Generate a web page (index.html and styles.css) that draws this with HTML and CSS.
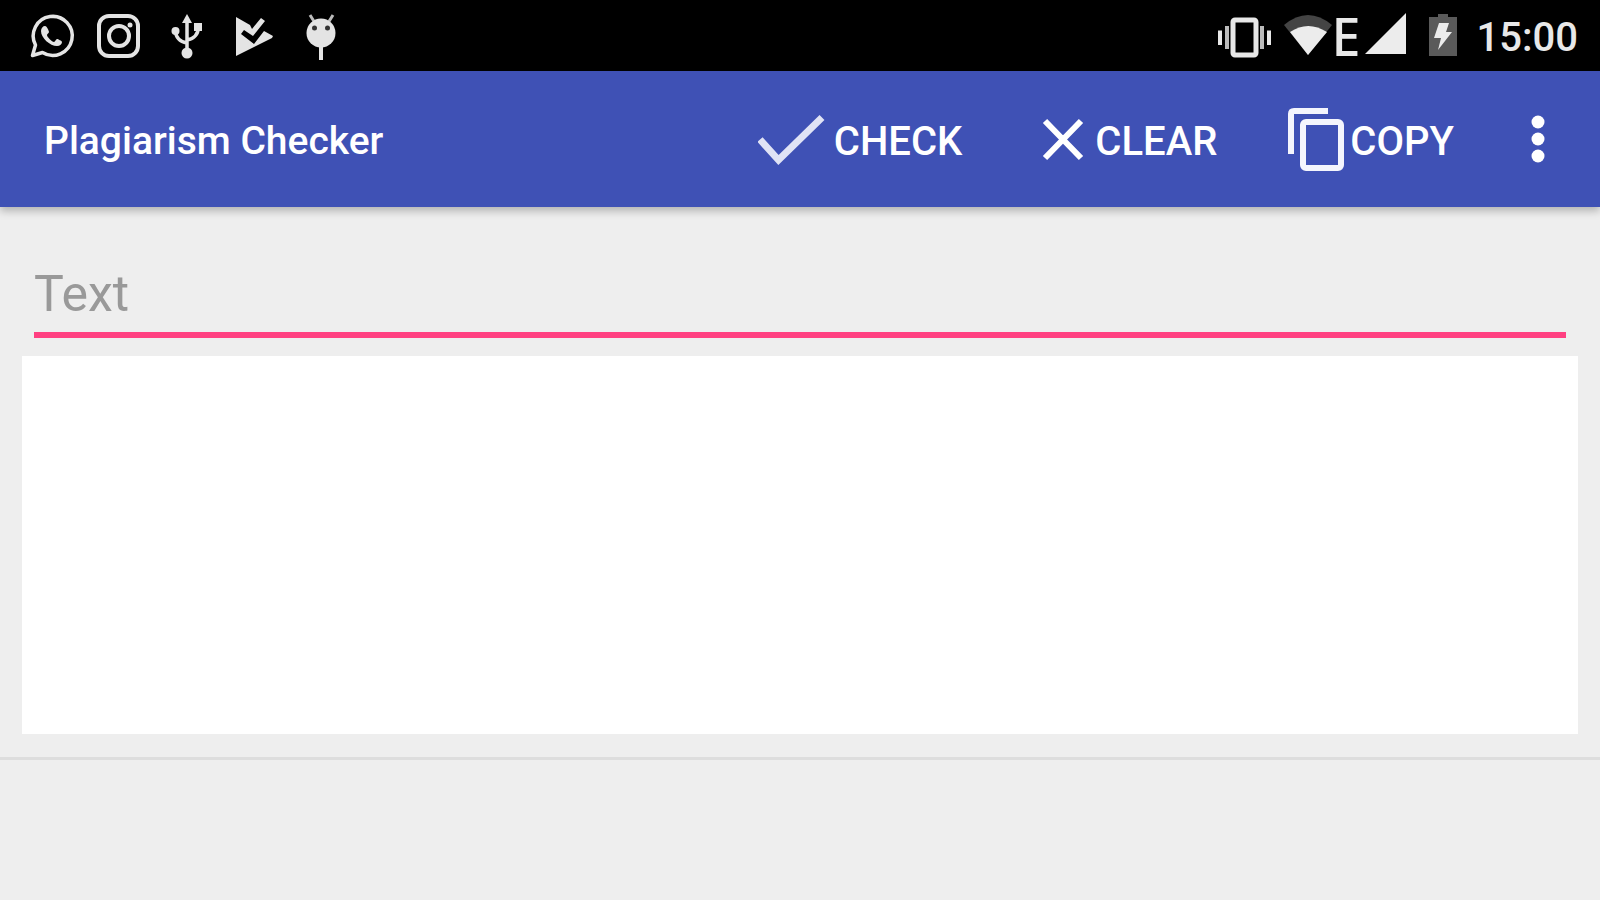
FILE: index.html
```html
<!DOCTYPE html>
<html lang="en">
<head>
  <meta charset="UTF-8">
  <meta name="viewport" content="width=device-width, initial-scale=1.0">
  <title>Plagiarism Checker</title>
  <link rel="stylesheet" href="styles.css">
</head>
<body>

  <!-- Status Bar -->
  <div class="status-bar">
    <div class="notifications">
      <svg class="status-icon" viewBox="0 0 48 48">
        <path d="M4.500 43.500 L7.500 33 A19.500 19.500 0 1 1 14.500 40.500 Z" fill="none" stroke="#e4e4e4" stroke-width="3.500" stroke-linejoin="round"/>
        <path d="M17 14c-2 0-4 2-4 5 0 7 9 15 16 15 3 0 5-2 5-4 0-1-4-3-5-3s-2 3-3 3c-2 0-7-5-7-7 0-1 2-2 2-3s-2-6-4-6z" fill="#e4e4e4"/>
      </svg>
      <svg class="status-icon" viewBox="0 0 48 48" fill="none" stroke="#e4e4e4" stroke-width="4">
        <rect x="4" y="4" width="39" height="40" rx="10"/>
        <circle cx="24" cy="24" r="10"/>
        <circle cx="35" cy="13" r="2.500" fill="#e4e4e4" stroke="none"/>
      </svg>
      <svg class="status-icon" viewBox="0 0 48 48" fill="#e4e4e4">
        <path d="M25 42V8M25 31Q14 29 13.500 19M25 28Q36 26 36.500 15" fill="none" stroke="#e4e4e4" stroke-width="3.500"/>
        <path d="M25 2l5 9H20z"/>
        <circle cx="13.500" cy="19" r="4"/>
        <rect x="32" y="11" width="8" height="8"/>
        <circle cx="25" cy="41" r="5.500"/>
      </svg>
      <svg class="status-icon" viewBox="0 0 48 48" fill="#e4e4e4">
        <path d="M7 5L21 13 23 17 32 6 36 9 24 24 15 18 12 22 25 32 35 19 44 24 43 26 7 44z"/>
      </svg>
      <svg class="status-icon" viewBox="0 0 48 48" fill="#e4e4e4">
        <path d="M14 3l5 8M37 3l-5 8" stroke="#bbb" stroke-width="3"/>
        <circle cx="25" cy="21" r="14.500"/>
        <path d="M25 34V48" stroke="#e4e4e4" stroke-width="4"/>
        <circle cx="18.500" cy="16" r="2.500" fill="#333"/>
        <circle cx="31.500" cy="16" r="2.500" fill="#333"/>
      </svg>
    </div>
    <div class="system">
      <svg class="vibrate-icon" viewBox="0 0 56 48" fill="none" stroke="#e8e8e8">
        <rect x="17" y="8" width="23" height="35" rx="2" stroke-width="5"/>
        <path d="M11 14V37M46 14V37" stroke="#bbb" stroke-width="4"/>
        <path d="M4 18.500V33M53 18.500V33" stroke-width="4"/>
      </svg>
      <svg class="wifi-icon" viewBox="0 0 48 48">
        <path d="M0 13Q24-7 48 13L24 43z" fill="#444"/>
        <path d="M6 20Q24 8 43 20L24 43z" fill="#ececec"/>
      </svg>
      <span class="network">E</span>
      <svg class="signal-icon" viewBox="0 0 42 48" fill="#ececec">
        <path d="M0 42L41 1V42z"/>
      </svg>
      <svg class="battery-icon" viewBox="0 0 28 48">
        <path d="M9 2h10v3h9v39H0V5h9z" fill="#5a5a5a"/>
        <path d="M10 11h10l-3 9h6L9 38l3-12H5z" fill="#ececec"/>
      </svg>
      <span class="clock">15:00</span>
    </div>
  </div>

  <!-- Toolbar -->
  <header class="toolbar">
    <h1 class="title">Plagiarism Checker</h1>
    <div class="actions">
      <button class="action" type="button">
        <svg class="action-icon" viewBox="0 0 76 76" fill="none" stroke="#e0e3f5" stroke-width="7">
          <path d="M2 38.500L20.500 59 64 16.500"/>
        </svg>
        <span class="label">CHECK</span>
      </button>
      <button class="action" type="button">
        <svg class="action-icon" viewBox="0 0 76 76" fill="none" stroke="#fff" stroke-width="6">
          <path d="M26 20L62 57M62 20L26 57"/>
        </svg>
        <span class="label">CLEAR</span>
      </button>
      <button class="action" type="button">
        <svg class="action-icon" viewBox="0 0 76 76" fill="none" stroke="#f4f5fd" stroke-width="6">
          <path d="M17 53V13Q17 10 20 10H54"/>
          <rect x="29" y="21" width="38" height="46" rx="3"/>
        </svg>
        <span class="label">COPY</span>
      </button>
      <button class="more" type="button" aria-label="More options">
        <svg class="more-icon" viewBox="0 0 54 76" fill="#fff">
          <circle cx="27" cy="21" r="6.500"/>
          <circle cx="27" cy="38" r="6.500"/>
          <circle cx="27" cy="55" r="6.500"/>
        </svg>
      </button>
    </div>
  </header>

  <!-- Text and Results -->
  <main class="content">
    <input class="text-input" type="text" placeholder="Text" aria-label="Text">
    <div class="results"></div>
  </main>

</body>
</html>
```
FILE: styles.css
```css
* {
  box-sizing: border-box;
}

body {
  margin: 0;
  min-height: 100vh;
  background-color: #eeeeee;
  font-family: Roboto, sans-serif;
}

.status-bar {
  display: flex;
  justify-content: space-between;
  align-items: center;
  height: 71px;
  padding: 0 22px 0 28px;
  background-color: #000;
  color: #e8e8e8;
}

.notifications {
  display: flex;
  gap: 19px;
}

.system {
  display: flex;
  align-items: center;
}

.status-icon {
  width: 48px;
  height: 48px;
}

.vibrate-icon {
  width: 56px;
  height: 48px;
  margin-right: 12px;
}

.wifi-icon {
  width: 48px;
  height: 48px;
}

.network {
  margin-right: 4px;
  font-family: "Noto Sans", sans-serif;
  font-size: 52px;
  font-weight: 500;
  line-height: 48px;
}

.signal-icon {
  width: 42px;
  height: 48px;
  margin-right: 22px;
}

.battery-icon {
  width: 28px;
  height: 48px;
  margin-right: 20px;
}

.clock {
  padding-top: 4px;
  font-size: 40px;
  font-weight: 500;
  line-height: 48px;
}

.toolbar {
  display: flex;
  justify-content: space-between;
  align-items: center;
  height: 136px;
  padding: 0 35px 0 44px;
  background-color: #3f51b5;
  color: #fff;
  box-shadow: 0 4px 8px rgba(0, 0, 0, 0.25);
}

.title {
  margin: 0;
  padding-top: 4px;
  font-size: 39px;
  font-weight: 500;
}

.actions {
  display: flex;
  align-items: center;
  gap: 57px;
}

.action,
.more {
  display: flex;
  align-items: center;
  padding: 0;
  border: none;
  background: none;
  color: #fff;
  font-family: inherit;
  font-size: 40px;
  font-weight: 500;
  cursor: pointer;
}

.label {
  padding-top: 4px;
}

.action-icon {
  width: 76px;
  height: 76px;
}

.more-icon {
  width: 54px;
  height: 76px;
}

.content {
  display: flex;
  flex-direction: column;
  gap: 18px;
  padding: 44px 22px 23px;
  border-bottom: 3px solid #dddddd;
}

.text-input {
  height: 87px;
  margin: 0 12px;
  padding: 4px 0 0;
  border: none;
  border-bottom: 6px solid #ff4081;
  outline: none;
  background: none;
  color: #212121;
  font-family: inherit;
  font-size: 50px;
}

.text-input::placeholder {
  color: #999999;
}

.results {
  height: 42vh;
  background-color: #fff;
}
```
